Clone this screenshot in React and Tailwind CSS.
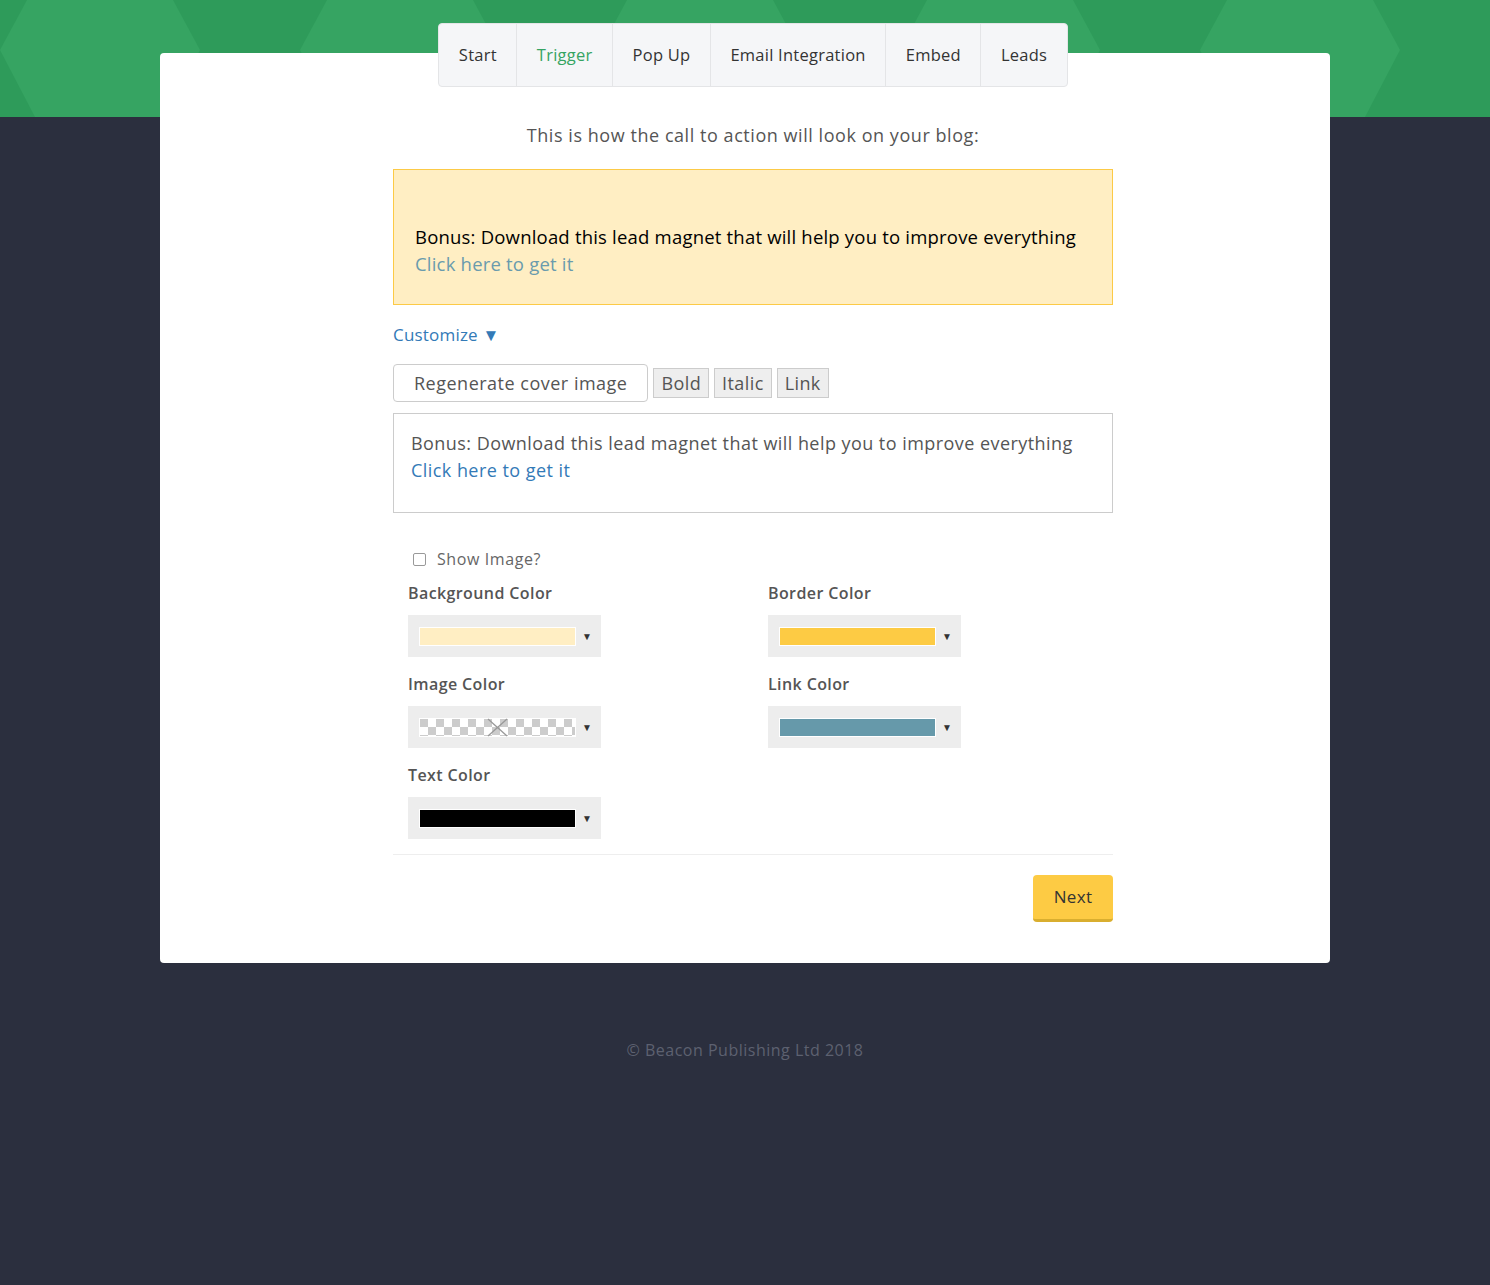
import React from "react";

const FONT = { fontFamily: "'Open Sans', Lato, sans-serif" };

function HexBand() {
  const hexes = [];
  for (let k = -1; k < 6; k++) {
    const cx = 100 + 300 * k;
    hexes.push(
      <polygon
        key={"a" + k}
        points={`${cx - 100},50 ${cx - 73},0 ${cx + 73},0 ${cx + 100},50 ${cx + 65},117 ${cx - 65},117`}
        fill="#36a462"
      />
    );
  }
  return (
    <svg width="1490" height="117" viewBox="0 0 1490 117" className="block w-full h-full">
      <rect width="1490" height="117" fill="#2e9b5a" />
      {hexes}
    </svg>
  );
}

function Swatch({ color, checker }) {
  if (checker) {
    return (
      <svg width="157" height="19" viewBox="0 0 157 19" className="block">
        <defs>
          <pattern id="chk" width="16" height="16" patternUnits="userSpaceOnUse" x="1" y="1">
            <rect width="16" height="16" fill="#ffffff" />
            <rect width="8" height="8" fill="#cccccc" />
            <rect x="8" y="8" width="8" height="8" fill="#cccccc" />
          </pattern>
        </defs>
        <rect x="0" y="0" width="157" height="19" fill="#ffffff" />
        <rect x="1" y="1" width="155" height="17" fill="url(#chk)" />
        <line x1="69" y1="1" x2="88" y2="18" stroke="#999" strokeWidth="1.3" />
        <line x1="88" y1="1" x2="69" y2="18" stroke="#999" strokeWidth="1.3" />
      </svg>
    );
  }
  return (
    <div className="w-[157px] h-[19px] border border-white" style={{ backgroundColor: color }} />
  );
}

function Picker({ label, color, checker }) {
  return (
    <div className="flex flex-col">
      <div className="text-[16px] leading-[24px] font-semibold tracking-[0.4px] text-[#555]">{label}</div>
      <div className="mt-[10px] w-[193px] h-[42px] bg-[#ededed] flex items-center pl-[11px]">
        <Swatch color={color} checker={checker} />
        <span className="ml-[6px] text-[10px] text-[#333]">▼</span>
      </div>
    </div>
  );
}

export default function App() {
  const tabs = ["Start", "Trigger", "Pop Up", "Email Integration", "Embed", "Leads"];
  return (
    <div className="min-h-[1285px] bg-[#2b2f3e]" style={FONT}>
      <div className="h-[117px] overflow-hidden">
        <HexBand />
      </div>
      <div className="relative -mt-[64px] mx-[160px] bg-white rounded-[4px] pb-[41px]">
        <div className="ml-[233px] w-[720px]">
          <div className="flex justify-center">
            <div className="relative -mt-[30px] flex h-[64px] bg-[#f5f6f8] border border-[#e4e5e7] rounded-[4px]">
              {tabs.map((t, i) => (
                <div
                  key={t}
                  className={
                    "flex items-center px-[19.5px] text-[16.5px] tracking-[0.25px] " +
                    (i > 0 ? "border-l border-[#e4e5e7] " : "") +
                    (t === "Trigger" ? "text-[#35a462]" : "text-[#333]")
                  }
                >
                  {t}
                </div>
              ))}
            </div>
          </div>

          <p className="mt-[35px] text-center text-[18px] leading-[26px] tracking-[0.55px] text-[#555]">
            This is how the call to action will look on your blog:
          </p>

          <div className="mt-[21px] border border-[#fcca46] bg-[#ffeec3] pl-[21px] pt-[53px] pb-[27px]">
            <div className="text-[18.5px] leading-[27px] tracking-[0.2px] text-black">
              Bonus: Download this lead magnet that will help you to improve everything
            </div>
            <div className="text-[18.5px] leading-[27px] tracking-[0.2px] text-[#6a9bad]">Click here to get it</div>
          </div>

          <div className="mt-[18px] text-[17px] leading-[24px] tracking-[0.2px] text-[#337ab7]">Customize ▼</div>

          <div className="mt-[17px] flex items-center">
            <button className="h-[38px] px-[20px] border border-[#ccc] rounded-[4px] text-[18px] tracking-[0.5px] text-[#555] bg-white">
              Regenerate cover image
            </button>
            <div className="ml-[5px] h-[30px] px-[7px] flex items-center bg-[#eee] border border-[#ccc] text-[18px] tracking-[0.4px] text-[#555]">
              Bold
            </div>
            <div className="ml-[5px] h-[30px] px-[7px] flex items-center bg-[#eee] border border-[#ccc] text-[18px] tracking-[0.4px] text-[#555]">
              Italic
            </div>
            <div className="ml-[5px] h-[30px] px-[7px] flex items-center bg-[#eee] border border-[#ccc] text-[18px] tracking-[0.4px] text-[#555]">
              Link
            </div>
          </div>

          <div className="mt-[11px] h-[100px] border border-[#ccc] pl-[17px] pt-[16px]">
            <div className="text-[18px] leading-[27px] tracking-[0.45px] text-[#555]">
              Bonus: Download this lead magnet that will help you to improve everything
            </div>
            <div className="text-[18px] leading-[27px] tracking-[0.45px] text-[#337ab7]">Click here to get it</div>
          </div>

          <div className="px-[15px]">
            <label className="mt-[34px] ml-[5px] flex items-center gap-[11px] text-[16px] leading-[24px] tracking-[0.6px] text-[#666]">
              <span className="w-[13px] h-[13px] border border-[#999] rounded-[2px] bg-white" />
              Show Image?
            </label>

            <div className="mt-[10px] grid grid-cols-2 gap-x-[30px] gap-y-[15px]">
              <Picker label="Background Color" color="#ffeec3" />
              <Picker label="Border Color" color="#fdcb44" />
              <Picker label="Image Color" checker />
              <Picker label="Link Color" color="#6699aa" />
              <Picker label="Text Color" color="#000000" />
            </div>
          </div>

          <div className="mt-[15px] border-t border-[#eee]" />

          <div className="mt-[20px] flex justify-end">
            <button className="w-[80px] h-[47px] bg-[#fdcb44] border-b-[3px] border-[#d9ae2f] rounded-[4px] text-[17px] tracking-[0.3px] text-[#333]">
              Next
            </button>
          </div>
        </div>
      </div>

      <div className="mt-[75px] text-center text-[16px] leading-[24px] tracking-[0.5px] text-[#5d6170]">
        © Beacon Publishing Ltd 2018
      </div>
    </div>
  );
}
